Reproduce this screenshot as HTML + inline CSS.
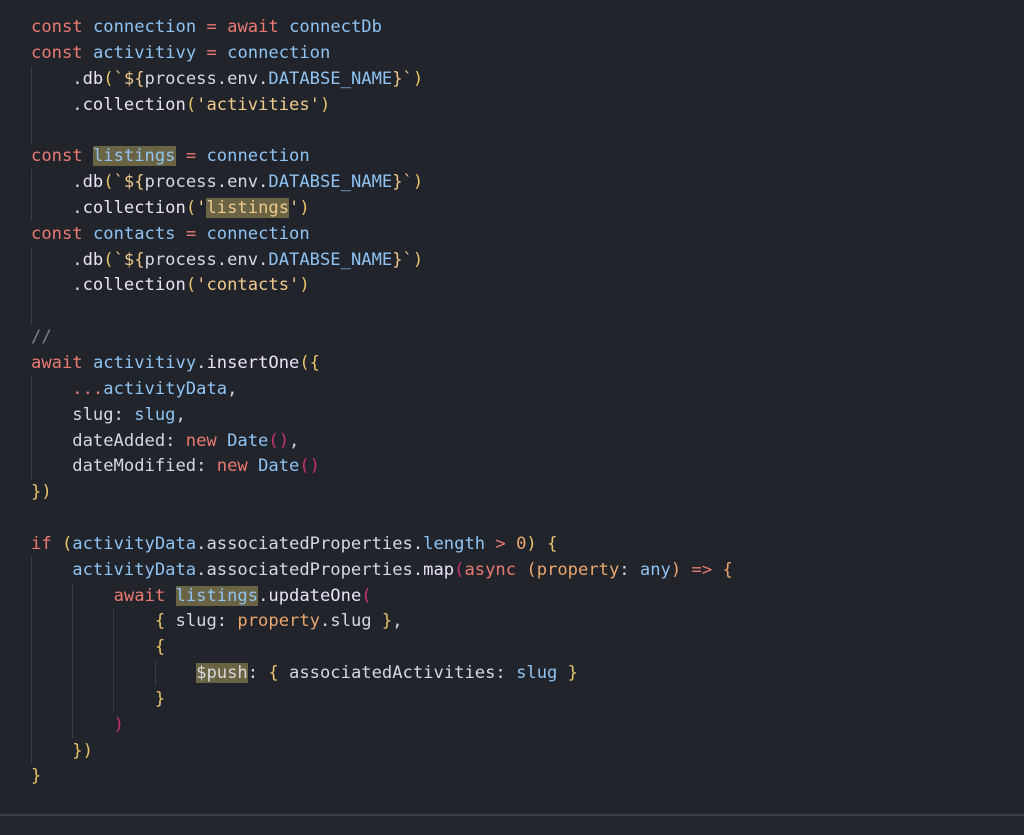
<!DOCTYPE html>
<html><head><meta charset="utf-8"><style>
html,body{margin:0;padding:0;background:#22242b;width:1024px;height:833px;overflow:hidden}
pre{position:absolute;left:31px;top:15px;margin:0;font-family:"DejaVu Sans Mono","Liberation Mono",monospace;font-size:17.15px;line-height:25.85px;color:#d6d8dd}
.k{color:#ea7a72}.b{color:#8ec3f3}.s{color:#f0c98c}.y{color:#e9c46a}.m{color:#c8336d}.o{color:#eba66b}.f{color:#e9e2f7}.c{color:#7d8190}
.h{background:#6a6444}
.g{position:absolute;width:1px;background:#3a3d46}
.bot{position:absolute;left:0;top:814px;width:1024px;height:19px;background:#25272e;border-top:2px solid #3c3f48}
</style></head><body>
<div class="g" style="left:31px;top:66px;height:78px"></div>
<div class="g" style="left:31px;top:169px;height:52px"></div>
<div class="g" style="left:31px;top:247px;height:78px"></div>
<div class="g" style="left:31px;top:376px;height:104px"></div>
<div class="g" style="left:31px;top:557px;height:207px"></div>
<div class="g" style="left:72px;top:583px;height:155px"></div>
<div class="g" style="left:113px;top:608px;height:104px"></div>
<div class="g" style="left:155px;top:660px;height:26px"></div>
<pre><span class="k">const</span> <span class="b">connection</span> <span class="k">=</span> <span class="k">await</span> <span class="b">connectDb</span>
<span class="k">const</span> <span class="b">activitivy</span> <span class="k">=</span> <span class="b">connection</span>
    .<span class="f">db</span><span class="y">(</span><span class="s">`${</span>process.env.<span class="b">DATABSE_NAME</span><span class="s">}`</span><span class="y">)</span>
    .<span class="f">collection</span><span class="y">(</span><span class="s">'activities'</span><span class="y">)</span>

<span class="k">const</span> <span class="b h">listings</span> <span class="k">=</span> <span class="b">connection</span>
    .<span class="f">db</span><span class="y">(</span><span class="s">`${</span>process.env.<span class="b">DATABSE_NAME</span><span class="s">}`</span><span class="y">)</span>
    .<span class="f">collection</span><span class="y">(</span><span class="s">'<span class="h">listings</span>'</span><span class="y">)</span>
<span class="k">const</span> <span class="b">contacts</span> <span class="k">=</span> <span class="b">connection</span>
    .<span class="f">db</span><span class="y">(</span><span class="s">`${</span>process.env.<span class="b">DATABSE_NAME</span><span class="s">}`</span><span class="y">)</span>
    .<span class="f">collection</span><span class="y">(</span><span class="s">'contacts'</span><span class="y">)</span>

<span class="c">//</span>
<span class="k">await</span> <span class="b">activitivy</span>.<span class="f">insertOne</span><span class="y">({</span>
    <span class="k">...</span><span class="b">activityData</span>,
    slug: <span class="b">slug</span>,
    dateAdded: <span class="k">new</span> <span class="b">Date</span><span class="m">()</span>,
    dateModified: <span class="k">new</span> <span class="b">Date</span><span class="m">()</span>
<span class="y">})</span>

<span class="k">if</span> <span class="y">(</span><span class="b">activityData</span>.associatedProperties.<span class="b">length</span> <span class="k">&gt;</span> <span class="o">0</span><span class="y">)</span> <span class="y">{</span>
    <span class="b">activityData</span>.associatedProperties.<span class="f">map</span><span class="m">(</span><span class="k">async</span> <span class="o">(</span><span class="o">property</span>: <span class="b">any</span><span class="o">)</span> <span class="k">=&gt;</span> <span class="o">{</span>
        <span class="k">await</span> <span class="b h">listings</span>.<span class="f">updateOne</span><span class="m">(</span>
            <span class="y">{</span> slug: <span class="o">property</span>.slug <span class="y">}</span>,
            <span class="y">{</span>
                <span class="h">$push</span>: <span class="y">{</span> associatedActivities: <span class="b">slug</span> <span class="y">}</span>
            <span class="y">}</span>
        <span class="m">)</span>
    <span class="y">})</span>
<span class="y">}</span></pre>
<div class="bot"></div>
</body></html>
